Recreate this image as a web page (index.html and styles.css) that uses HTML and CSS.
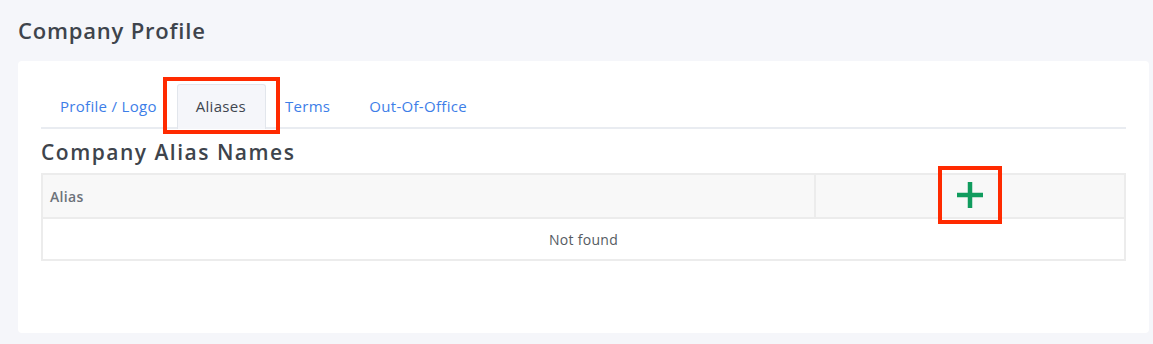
FILE: index.html
```html
<!DOCTYPE html>
<html>
<head>
<title>Company Profile</title>
<link rel="stylesheet" href="styles.css">
</head>
<body>
  <h1 class="page-title">Company Profile</h1>
  <div class="card">
    <ul class="tabs">
      <li><a href="#" class="tab">Profile / Logo</a></li>
      <li class="marked"><a href="#" class="tab active">Aliases</a></li>
      <li><a href="#" class="tab">Terms</a></li>
      <li><a href="#" class="tab">Out-Of-Office</a></li>
    </ul>
    <h2 class="section-title">Company Alias Names</h2>
    <table class="alias-table">
      <thead>
        <tr>
          <th class="col-alias">Alias</th>
          <th class="col-add">
            <span class="marked add-wrap">
              <button type="button" class="add-btn" title="Add alias">
                <svg width="28" height="28" viewBox="0 0 28 28">
                  <path d="M14 1v26M1 14h26" stroke="#109c5e" stroke-width="4.5" fill="none"/>
                </svg>
              </button>
            </span>
          </th>
        </tr>
      </thead>
      <tbody>
        <tr>
          <td colspan="2" class="empty">Not found</td>
        </tr>
      </tbody>
    </table>
  </div>
</body>
</html>
```

FILE: styles.css
```css
body {
  margin: 0;
  padding: 0 4px 13px 18px;
  background-color: #f5f6fa;
  font-family: "Open Sans", "Noto Sans", sans-serif;
  color: #3f4650;
}
.page-title {
  margin: 0;
  padding: 16px 0 17px;
  font-size: 22px;
  font-weight: 600;
  letter-spacing: 0.8px;
  line-height: 28px;
  color: #3e444c;
}
.card {
  background: #fff;
  border-radius: 4px;
  padding: 23px 23px 72px 23px;
}
.tabs {
  list-style: none;
  margin: 0;
  padding: 0;
  display: flex;
  border-bottom: 2px solid #e9ecf1;
}
.tabs li {
  position: relative;
}
.tab {
  display: block;
  padding: 0 19px 0 18px;
  height: 42px;
  line-height: 42px;
  font-size: 15px;
  letter-spacing: 0.3px;
  color: #3d7ee8;
  text-decoration: none;
  border: 1px solid transparent;
  border-bottom: none;
  border-radius: 3px 3px 0 0;
}
.tab.active {
  color: #3f4650;
  background: #f5f6fa;
  border-color: #e2e6ec;
  margin: 0 0 -2px;
  height: 44px;
}
.section-title {
  margin: 0;
  padding: 10px 0 8px;
  font-size: 21px;
  font-weight: 600;
  letter-spacing: 1.5px;
  line-height: 26px;
  color: #3e444c;
}
.alias-table {
  width: 100%;
  border-collapse: collapse;
  font-size: 14px;
}
.alias-table th,
.alias-table td {
  border: 2px solid #ececec;
}
.alias-table th {
  background: #f8f8f8;
  height: 42px;
  padding: 0 7px;
  text-align: left;
  color: #6c727a;
  font-weight: 600;
  letter-spacing: 0.3px;
}
.col-alias {
  width: 757px;
}
.col-add {
  text-align: center !important;
}
.add-wrap {
  position: relative;
  display: inline-block;
  vertical-align: middle;
}
.add-btn {
  background: none;
  border: none;
  padding: 0;
  cursor: pointer;
  display: block;
}
.empty {
  height: 38px;
  text-align: center;
  color: #555b62;
  letter-spacing: 0.3px;
}
.marked::after {
  content: "";
  position: absolute;
  border: 4px solid #ff2a00;
  pointer-events: none;
}
.tabs li.marked::after {
  left: -14px;
  right: -14px;
  top: -7px;
  bottom: -7px;
}
.add-wrap.marked::after {
  left: -18px;
  right: -18px;
  top: -15px;
  bottom: -12px;
}
```
